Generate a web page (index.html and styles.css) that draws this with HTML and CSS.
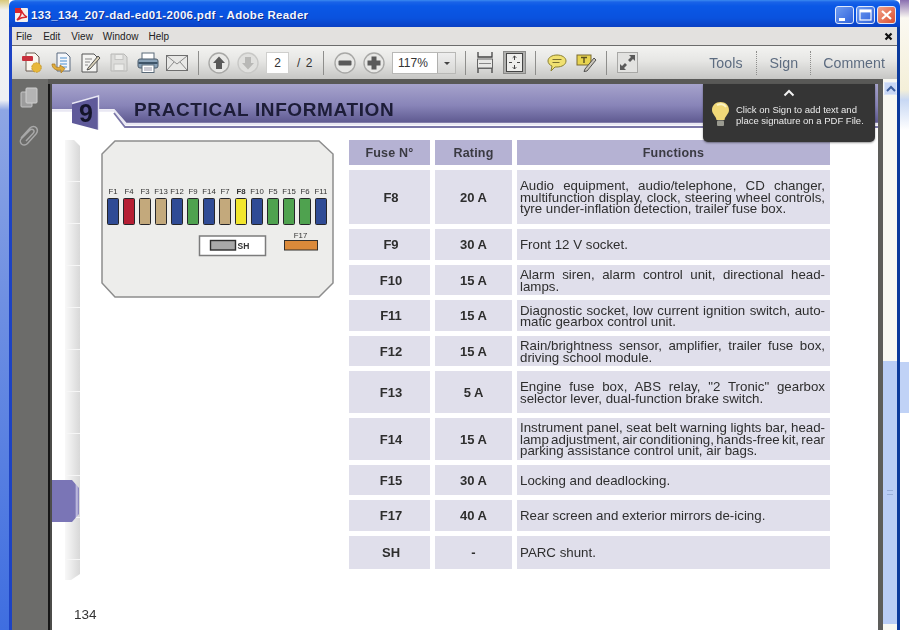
FILE: index.html
```html
<!DOCTYPE html>
<html lang="en">
<head>
<meta charset="utf-8">
<title>133_134_207-dad-ed01-2006.pdf - Adobe Reader</title>
<link rel="stylesheet" href="styles.css">
</head>
<body>
<div class="desk-left"></div>
<div class="window">
  <header class="titlebar">
    <svg class="app-icon" width="13" height="14" viewBox="0 0 13 14"><rect width="13" height="14" rx="1" fill="#f4f0ee"/><rect x="0" y="0" width="6" height="5" fill="#d8262c"/><path d="M2 12C5 9 7 5 6 2C8 6 9 8 12 9C8 9 5 10 2 12Z" fill="none" stroke="#d8262c" stroke-width="1.6"/></svg>
    <span class="title-text">133_134_207-dad-ed01-2006.pdf - Adobe Reader</span>
    <div class="win-buttons">
      <span class="win-btn"><svg width="19" height="18" viewBox="0 0 19 18"><rect x="4" y="12" width="6" height="3" fill="#fff"/></svg></span>
      <span class="win-btn"><svg width="19" height="18" viewBox="0 0 19 18"><rect x="4" y="4" width="11" height="10" fill="none" stroke="#fff" stroke-width="1.2"/><rect x="4" y="4" width="11" height="2.4" fill="#fff"/></svg></span>
      <span class="win-btn win-close"><svg width="19" height="18" viewBox="0 0 19 18"><path d="M5 5L14 13M14 5L5 13" stroke="#fff" stroke-width="2.2"/></svg></span>
    </div>
  </header>
  <div class="frame">
    <nav class="menubar">
      <span class="menu-item m-file">File</span>
      <span class="menu-item m-edit">Edit</span>
      <span class="menu-item m-view">View</span>
      <span class="menu-item m-window">Window</span>
      <span class="menu-item m-help">Help</span>
      <svg class="menu-close" width="9" height="9" viewBox="0 0 9 9"><path d="M1.5 1.5L7.5 7.5M7.5 1.5L1.5 7.5" stroke="#111" stroke-width="2.2"/></svg>
    </nav>
    <div class="toolbar">
      <span class="btn"><svg width="22" height="23" viewBox="0 0 22 23"><path d="M5 2H14L18 6V20H5Z" fill="#faf6ee" stroke="#6a5a50"/><rect x="1" y="5" width="11" height="5" rx="1" fill="#c8303c"/><circle cx="15.500" cy="16.500" r="4.800" fill="#e8b83c" stroke="#b98d22" stroke-width=".8" stroke-dasharray="2 1"/></svg></span>
      <span class="btn"><svg width="22" height="23" viewBox="0 0 22 23"><path d="M7 2H16L20 6V20H7Z" fill="#f4f6fa" stroke="#5a6a80"/><path d="M10 7H17M10 10H17M10 13H17M12 16H17" stroke="#4d8fd0" stroke-width="1.200"/><path d="M2 13C2 18 7 20 11 19V22L15 17.500 10 14V16C7 17 5 16 5 13Z" fill="#e0ac3c" stroke="#a8761c" stroke-width=".7"/></svg></span>
      <span class="btn"><svg width="22" height="23" viewBox="0 0 22 23"><path d="M3 3H15L18 6V21H3Z" fill="#f4f4f2" stroke="#555"/><path d="M6 8H13M6 11H11M6 14H9" stroke="#888"/><path d="M9 17L19 5L21 7L11 18L8 19Z" fill="#d8d0b8" stroke="#444" stroke-width=".9"/></svg></span>
      <span class="btn"><svg width="20" height="21" viewBox="0 0 20 21"><path d="M2 2H15L18 5V19H2Z" fill="#dcdcda" stroke="#b8b8b6"/><rect x="6" y="2.500" width="8" height="5" fill="#ececea" stroke="#c4c4c2"/><rect x="5" y="12" width="10" height="6.500" fill="#ececea" stroke="#c4c4c2"/></svg></span>
      <span class="btn"><svg width="22" height="22" viewBox="0 0 22 22"><rect x="5" y="1" width="12" height="7" fill="#fff" stroke="#5a6a78"/><rect x="1" y="7" width="20" height="9" rx="2" fill="#8aa2b8" stroke="#4d5d6c"/><rect x="1.500" y="10" width="19" height="2" fill="#3e5468"/><rect x="5" y="13" width="12" height="7.500" fill="#fff" stroke="#5a6a78"/><path d="M7 16H15M7 18H15" stroke="#99a"/></svg></span>
      <span class="btn"><svg width="22" height="16" viewBox="0 0 22 16"><rect x=".5" y=".5" width="21" height="15" fill="#e8e8e6" stroke="#6e6e6e"/><path d="M1 1L11 9L21 1M1 15L8 7M21 15L14 7" fill="none" stroke="#8a8a8a"/></svg></span>
      <span class="sep s-a"></span>
      <span class="btn b-up"><svg width="22" height="22" viewBox="0 0 22 22"><circle cx="11" cy="11" r="10" fill="#e8e8e6" stroke="#a8a8a6" stroke-width="1.400"/><path d="M11 4.500L17 11H14V17H8V11H5Z" fill="#5a5a5a"/></svg></span>
      <span class="btn"><svg width="22" height="22" viewBox="0 0 22 22"><circle cx="11" cy="11" r="10" fill="#e0e0de" stroke="#c8c8c6" stroke-width="1.400"/><path d="M11 17.500L17 11H14V5H8V11H5Z" fill="#b8b8b6"/></svg></span>
      <span class="page-box">2</span>
      <span class="page-total">/ 2</span>
      <span class="sep s-b"></span>
      <span class="btn b-minus"><svg width="22" height="22" viewBox="0 0 22 22"><circle cx="11" cy="11" r="10" fill="#e8e8e6" stroke="#a8a8a6" stroke-width="1.400"/><rect x="4.500" y="8.500" width="13" height="5" rx="1" fill="#5a5a5a"/></svg></span>
      <span class="btn"><svg width="22" height="22" viewBox="0 0 22 22"><circle cx="11" cy="11" r="10" fill="#e8e8e6" stroke="#a8a8a6" stroke-width="1.400"/><path d="M8.500 4.500H13.500V8.500H17.500V13.500H13.500V17.500H8.500V13.500H4.500V8.500H8.500Z" fill="#5a5a5a"/></svg></span>
      <div class="zoom-select"><span class="zoom-value">117%</span><span class="zoom-arrow"></span></div>
      <span class="sep s-c"></span>
      <span class="btn b-fitw"><svg width="18" height="23" viewBox="0 0 18 23"><path d="M2 1V6H16V1M2 22V17H16V22" fill="none" stroke="#444" stroke-width="1.300"/><rect x="1.500" y="8" width="15" height="9" fill="#e8e8e6" stroke="#666"/><path d="M3 12.500H15" stroke="#888"/></svg></span>
      <span class="btn-on"><svg width="17" height="19" viewBox="0 0 17 19"><rect x=".5" y=".5" width="16" height="18" fill="#eeeeec" stroke="#444"/><path d="M8.500 3V7M6.700 4.800L8.500 3L10.300 4.800M8.500 16V12M6.700 14.200L8.500 16L10.300 14.200M3 9.500H6M11 9.500H14" stroke="#444" fill="none"/></svg></span>
      <span class="sep s-d"></span>
      <span class="btn b-note"><svg width="20" height="18" viewBox="0 0 20 18"><path d="M10 1C15 1 19 3.500 19 7C19 10.500 15 13 10 13H8L4 17L5 12C2.500 11 1 9 1 7C1 3.500 5 1 10 1Z" fill="#f0e070" stroke="#8a8030"/><path d="M5.500 5.500H14.500M5.500 8.500H12.500" stroke="#7a7030"/></svg></span>
      <span class="btn b-hl"><svg width="21" height="18" viewBox="0 0 21 18"><rect x="1" y="1" width="14" height="10" fill="#e8d450" stroke="#7a6a30"/><path d="M5 3.500H11M8 3.500V9" stroke="#5a5020" stroke-width="1.400"/><path d="M9 15L18 4L20 6L11 17L8 17.500Z" fill="#c8c4ba" stroke="#444" stroke-width=".9"/></svg></span>
      <span class="sep s-e"></span>
      <span class="expand"><svg width="21" height="21" viewBox="0 0 21 21"><rect x=".5" y=".5" width="20" height="20" fill="#e2e2e0" stroke="#a8a8a6"/><path d="M12 3H18V9L16 7L13 10L11 8L14 5ZM9 18H3V12L5 14L8 11L10 13L7 16Z" fill="#5a5a5a"/></svg></span>
      <div class="panels">
        <span class="panel-link">Tools</span>
        <span class="panel-sep panel-sep-first"></span>
        <span class="panel-link">Sign</span>
        <span class="panel-sep"></span>
        <span class="panel-link">Comment</span>
      </div>
    </div>
    <div class="workspace">
      <aside class="navpanel">
        <svg class="nav-pages" width="18" height="21" viewBox="0 0 18 21"><rect x="1" y="5" width="11" height="15" rx="1" fill="#9c9c9c" stroke="#c4c4c4"/><rect x="6" y="1" width="11" height="15" rx="1" fill="#b4b4b4" stroke="#cfcfcf"/></svg>
        <svg class="nav-clip" width="21" height="23" viewBox="0 0 21 23"><path d="M3 14L12 4C14 2 17 2 18.500 4C20 6 19.500 8 18 10L9.500 19.500C8 21 5.500 21.500 3.500 20C2 18.500 2 16 3.500 14.500L12 6C13 5 14.500 5 15.500 6C16.500 7 16 8.500 15 9.500L8 17" fill="none" stroke="#a8a8a8" stroke-width="1.500"/></svg>
      </aside>
      <main class="page-area">
        <div class="page">
          <div class="banner">
            <svg class="banner-art" width="826" height="46" viewBox="0 0 826 46"><defs><linearGradient id="band" x1="0" y1="0" x2="0" y2="1"><stop offset="0" stop-color="#a6a3cc"/><stop offset=".55" stop-color="#8884b8"/><stop offset="1" stop-color="#5d588f"/></linearGradient></defs><path d="M0 0H826V39H74L62 25H0Z" fill="url(#band)"/><path d="M0 26.500H62L74 40H826" fill="none" stroke="#e9e8f3" stroke-width="2.400"/><path d="M62 29L73 43H826" fill="none" stroke="#7b77a8" stroke-width="1.800"/><path d="M20 19.500L46.500 12V46L20 39Z" fill="#5f5a9a"/><path d="M20 19.500L46.500 12V46" fill="none" stroke="#e8e7f4" stroke-width="1.400"/></svg>
            <span class="chapter">9</span>
            <h1 class="banner-title">PRACTICAL INFORMATION</h1>
          </div>
          <div class="content">
            <div class="strip"></div>
            <div class="side-tab"></div>
            <svg class="diagram" width="235" height="160" viewBox="0 0 235 160">
              <polygon points="15,2 219,2 233,15 233,144 219,158 15,158 2,144 2,15" fill="#ededeb" stroke="#8d8d8d" stroke-width="1.500"/>
              <g class="fuse-labels">
                <text x="13" y="55">F1</text><text x="29" y="55">F4</text><text x="45" y="55">F3</text><text x="61" y="55">F13</text><text x="77" y="55">F12</text><text x="93" y="55">F9</text><text x="109" y="55">F14</text><text x="125" y="55">F7</text><text x="141" y="55" class="fuse-strong">F8</text><text x="157" y="55">F10</text><text x="173" y="55">F5</text><text x="189" y="55">F15</text><text x="205" y="55">F6</text><text x="221" y="55">F11</text>
              </g>
              <g stroke="#26262a" stroke-width="1">
                <rect x="7.500" y="59.500" width="11" height="26" rx="1" fill="#2f4b95"/><rect x="23.500" y="59.500" width="11" height="26" rx="1" fill="#b51e33"/><rect x="39.500" y="59.500" width="11" height="26" rx="1" fill="#c3a97c"/><rect x="55.500" y="59.500" width="11" height="26" rx="1" fill="#c3a97c"/><rect x="71.500" y="59.500" width="11" height="26" rx="1" fill="#2f4b95"/><rect x="87.500" y="59.500" width="11" height="26" rx="1" fill="#4fa24f"/><rect x="103.500" y="59.500" width="11" height="26" rx="1" fill="#2f4b95"/><rect x="119.500" y="59.500" width="11" height="26" rx="1" fill="#c3a97c"/><rect x="135.500" y="59.500" width="11" height="26" rx="1" fill="#f2e62e"/><rect x="151.500" y="59.500" width="11" height="26" rx="1" fill="#2f4b95"/><rect x="167.500" y="59.500" width="11" height="26" rx="1" fill="#4fa24f"/><rect x="183.500" y="59.500" width="11" height="26" rx="1" fill="#4fa24f"/><rect x="199.500" y="59.500" width="11" height="26" rx="1" fill="#4fa24f"/><rect x="215.500" y="59.500" width="11" height="26" rx="1" fill="#2f4b95"/>
              </g>
              <rect x="99.500" y="97" width="66" height="19.500" fill="#fff" stroke="#7c7c7c" stroke-width="1.500"/>
              <rect x="110.500" y="101.500" width="25" height="9.500" fill="#a8a8a8" stroke="#2c2c2c" stroke-width="1.400"/>
              <text x="137.500" y="110" class="fuse-sh">SH</text>
              <text x="200.500" y="98.500" class="fuse-f17">F17</text>
              <rect x="184.500" y="101.500" width="33" height="9.500" fill="#db8a3a" stroke="#33302c"/>
            </svg>
            <div class="fuse-table">
              <div class="th">Fuse N°</div><div class="th">Rating</div><div class="th">Functions</div>
              <div class="td td-key td-id">F8</div><div class="td td-key">20 A</div>
              <div class="td td-text"><span class="line full">Audio equipment, audio/telephone, CD changer,</span><span class="line full tight">multifunction display, clock, steering wheel controls,</span><span class="line">tyre under-inflation detection, trailer fuse box.</span></div>
              <div class="td td-key td-id">F9</div><div class="td td-key">30 A</div>
              <div class="td td-text"><span class="line">Front 12 V socket.</span></div>
              <div class="td td-key td-id">F10</div><div class="td td-key">15 A</div>
              <div class="td td-text"><span class="line full">Alarm siren, alarm control unit, directional head-</span><span class="line">lamps.</span></div>
              <div class="td td-key td-id">F11</div><div class="td td-key">15 A</div>
              <div class="td td-text"><span class="line full tight">Diagnostic socket, low current ignition switch, auto-</span><span class="line">matic gearbox control unit.</span></div>
              <div class="td td-key td-id">F12</div><div class="td td-key">15 A</div>
              <div class="td td-text"><span class="line full">Rain/brightness sensor, amplifier, trailer fuse box,</span><span class="line">driving school module.</span></div>
              <div class="td td-key td-id">F13</div><div class="td td-key">5 A</div>
              <div class="td td-text"><span class="line full">Engine fuse box, ABS relay, "2 Tronic" gearbox</span><span class="line">selector lever, dual-function brake switch.</span></div>
              <div class="td td-key td-id">F14</div><div class="td td-key">15 A</div>
              <div class="td td-text"><span class="line full tight">Instrument panel, seat belt warning lights bar, head-</span><span class="line full tight">lamp adjustment, air conditioning, hands-free kit, rear</span><span class="line">parking assistance control unit, air bags.</span></div>
              <div class="td td-key td-id">F15</div><div class="td td-key">30 A</div>
              <div class="td td-text"><span class="line">Locking and deadlocking.</span></div>
              <div class="td td-key td-id">F17</div><div class="td td-key">40 A</div>
              <div class="td td-text"><span class="line">Rear screen and exterior mirrors de-icing.</span></div>
              <div class="td td-key td-id">SH</div><div class="td td-key">-</div>
              <div class="td td-text"><span class="line">PARC shunt.</span></div>
            </div>
          </div>
          <div class="page-number">134</div>
        </div>
        <div class="page-edge"></div>
        <div class="scrollbar">
          <span class="scroll-up"><svg width="10" height="7" viewBox="0 0 10 7"><path d="M1 6L5 2L9 6" fill="none" stroke="#3d5f9e" stroke-width="2"/></svg></span>
          <span class="scroll-thumb"><span class="grip"></span></span>
        </div>
        <div class="tooltip">
          <svg class="tip-chevron" width="12" height="8" viewBox="0 0 12 8"><path d="M1.500 6.500L6 2L10.500 6.500" fill="none" stroke="#f2f2f2" stroke-width="2"/></svg>
          <div class="tip-body">
            <svg class="tip-bulb" width="19" height="26" viewBox="0 0 19 26"><path d="M9.500 1C14.500 1 18 4.500 18 9C18 13 14 15 13.500 19H5.500C5 15 1 13 1 9C1 4.500 4.500 1 9.500 1Z" fill="#f0d878"/><path d="M6 4C9 2.500 13 3 15 6" fill="none" stroke="#fbf3c4" stroke-width="2"/><rect x="6" y="19.500" width="7" height="5.500" rx="1" fill="#9a9a90"/></svg>
            <p class="tip-text">Click on Sign to add text and<br>place signature on a PDF File.</p>
          </div>
        </div>
      </main>
    </div>
  </div>
</div>
<div class="desk-right"><div class="desk-thumb"></div></div>
</body>
</html>
```
FILE: styles.css
```css
* { box-sizing: border-box; }
html, body { margin: 0; padding: 0; }
body {
  width: 909px;
  height: 630px;
  overflow: hidden;
  display: flex;
  background: #fff;
  font-family: "Liberation Sans", Arial, sans-serif;
}
.desk-left {
  width: 9px;
  background: linear-gradient(180deg, #d9c97a 0, #f2f2f0 10px, #eef0f4 100px, #8ea6e4 110px, #6f90e2 300px, #3f6ee0 630px);
}
.window {
  width: 891px;
  height: 630px;
  display: flex;
  flex-direction: column;
  filter: blur(.35px);
}
.desk-right {
  width: 9px;
  background: linear-gradient(180deg, #8a6fb0 0, #fbf9f2 18px, #f4efd8 90px, #c8d8f4 100px, #fff 130px);
  padding-top: 362px;
}
.desk-thumb { height: 51px; background: #c0d2f6; }

.titlebar {
  height: 27px;
  flex: none;
  display: flex;
  align-items: center;
  padding: 0 4px 0 6px;
  border-radius: 6px 6px 0 0;
  background: linear-gradient(180deg, #3b8af0 0, #1a63e8 2px, #0a58e6 6px, #0a52de 18px, #0a40c4 27px);
}
.app-icon { flex: none; margin-top: 2px; }
.title-text {
  margin-left: 3px;
  margin-top: 3px;
  color: #f4f7ff;
  font-size: 11.500px;
  font-weight: 700;
  letter-spacing: .33px;
  white-space: nowrap;
  text-shadow: 1px 1px 0 #0a2c90;
}
.win-buttons { margin-left: auto; display: flex; gap: 2px; margin-top: 3px; }
.win-btn {
  width: 19px;
  height: 18px;
  display: block;
  border: 1px solid #dfe9fb;
  border-radius: 3px;
  background: linear-gradient(135deg, #6f9cf0, #2f62dc);
}
.win-btn svg { display: block; margin: -1px; }
.win-close { background: linear-gradient(135deg, #f0a088, #dd5030); }

.frame {
  flex: 1;
  min-height: 0;
  display: flex;
  flex-direction: column;
  border-left: 3px solid #1d43c4;
  border-right: 3px solid #0b3a9c;
}
.menubar {
  height: 18px;
  flex: none;
  display: flex;
  align-items: center;
  background: #e3e1df;
  font-size: 10px;
  color: #222;
}
.menu-item { display: block; }
.m-file { margin-left: 4px; }
.m-edit { margin-left: 11px; }
.m-view { margin-left: 11px; }
.m-window { margin-left: 10px; }
.m-help { margin-left: 10px; }
.menu-close { margin-left: auto; margin-right: 4px; }

.toolbar {
  height: 34px;
  flex: none;
  display: flex;
  align-items: center;
  padding-left: 5px;
  border-top: 1px solid #6c6c6c;
  background: linear-gradient(180deg, #f3f3f1 0, #e6e6e4 45%, #c6c6c4 100%);
}
.btn { width: 29px; flex: none; display: flex; justify-content: center; align-items: center; }
.sep { width: 1px; height: 24px; flex: none; background: #8e8e8c; }
.s-a { margin-left: 7px; }
.s-b { margin-left: 8px; }
.s-c { margin-left: 9px; }
.s-d { margin-left: 9px; }
.s-e { margin-left: 5px; }
.b-up { margin-left: 5px; }
.page-box {
  width: 23px;
  height: 22px;
  flex: none;
  margin-left: 4px;
  background: #fff;
  border: 1px solid #cfcfcd;
  font-size: 12px;
  color: #333;
  text-align: center;
  line-height: 20px;
}
.page-total { width: 18px; flex: none; margin-left: 8px; font-size: 12px; color: #333; white-space: nowrap; word-spacing: 2px; }
.b-minus { margin-left: 6px; }
.zoom-select {
  width: 64px;
  height: 22px;
  flex: none;
  margin-left: 4px;
  display: flex;
  border: 1px solid #b8b8b6;
  background: #fff;
}
.zoom-value { width: 44px; font-size: 12px; color: #333; line-height: 20px; padding-left: 5px; }
.zoom-arrow { flex: 1; border-left: 1px solid #b0b0ae; background: linear-gradient(180deg, #eee, #d8d8d6); position: relative; }
.zoom-arrow::after {
  content: "";
  position: absolute;
  left: 6px;
  top: 9px;
  border: 3px solid transparent;
  border-top: 3px solid #444;
}
.b-fitw { width: 26px; margin-left: 6px; }
.btn-on {
  width: 23px;
  height: 23px;
  flex: none;
  margin-left: 5px;
  display: flex;
  align-items: center;
  justify-content: center;
  background: #b0b0ae;
  border: 1px solid #8a8a88;
}
.b-note { margin-left: 6px; }
.b-hl { margin-left: 1px; }
.expand { width: 21px; height: 21px; flex: none; margin-left: 10px; }
.expand svg { display: block; }
.panels { margin-left: auto; padding-right: 12px; display: flex; align-items: center; gap: 12px; }
.panel-link { font-size: 14.200px; color: #5d6c80; letter-spacing: .05px; }
.panel-sep { width: 1px; height: 24px; border-left: 1px dotted #8e8e8c; }
.panel-sep-first { margin-right: 1px; margin-left: 1px; }

.workspace { flex: 1; min-height: 0; display: flex; }
.navpanel {
  width: 36px;
  flex: none;
  display: flex;
  flex-direction: column;
  align-items: center;
  padding-top: 8px;
  background: #6c6c6a;
}
.nav-pages { margin-left: -3px; }
.nav-clip { margin-top: 16px; margin-left: -3px; }

.page-area {
  flex: 1;
  min-width: 0;
  position: relative;
  display: flex;
  padding-top: 5px;
  padding-left: 4px;
  background: linear-gradient(90deg, #161616 0, #161616 1.500px, #4c4c4a 1.500px);
}
.page-area::before {
  content: "";
  position: absolute;
  left: 0;
  right: 0;
  top: 0;
  height: 5px;
  background: #595957;
}
.page {
  width: 826px;
  flex: none;
  background: #fff;
  overflow: hidden;
}
.banner { position: relative; height: 43px; }
.banner-art { position: absolute; left: 0; top: 0; }
.banner-title {
  position: relative;
  margin: 0;
  padding: 15px 0 0 82px;
  font-size: 19px;
  line-height: 22px;
  font-weight: 700;
  color: #1d1d38;
  letter-spacing: .62px;
  white-space: nowrap;
}
.chapter {
  position: absolute;
  left: 26px;
  top: 16px;
  width: 16px;
  text-align: center;
  font-size: 25px;
  line-height: 26px;
  font-weight: 700;
  color: #14142a;
}
.content {
  position: relative;
  height: 458px;
  display: flex;
  align-items: flex-start;
  padding: 13px 0 0 13px;
}
.strip {
  width: 15px;
  height: 440px;
  flex: none;
  clip-path: polygon(0 0, 9px 0, 15px 6px, 15px 434px, 6px 440px, 0 440px);
  background:
    repeating-linear-gradient(180deg, transparent 0, transparent 41px, #f6f6f6 41px, #f6f6f6 42px),
    linear-gradient(90deg, #f8f8f8 0, #ececec 40%, #d8d8d8 100%);
}
.side-tab {
  position: absolute;
  left: 0;
  top: 353px;
  width: 27px;
  height: 42px;
  clip-path: polygon(0 0, 20px 0, 27px 8px, 27px 34px, 20px 42px, 0 42px);
  background: linear-gradient(90deg, #7a75b6 0, #7a75b6 85%, #c9c6e4 92%, #7a75b6 100%);
}
.diagram { flex: none; margin-left: 20px; margin-top: -1px; }
.fuse-labels text { font-size: 7.800px; fill: #333; text-anchor: middle; font-family: "Liberation Sans", Arial, sans-serif; }
.fuse-labels .fuse-strong { font-weight: 700; }
.fuse-sh { font-size: 8.500px; font-weight: 700; fill: #333; font-family: "Liberation Sans", Arial, sans-serif; }
.fuse-f17 { font-size: 7.800px; fill: #333; text-anchor: middle; font-family: "Liberation Sans", Arial, sans-serif; }

.fuse-table {
  margin-left: 14px;
  width: 481px;
  flex: none;
  display: grid;
  grid-template-columns: 81px 77px 313px;
  grid-template-rows: 25px 54px 31px 30px 31px 30px 42px 42px 30px 31px 33px;
  column-gap: 5px;
  row-gap: 5px;
  color: #2e2e2e;
}
.th {
  background: #b5b2d3;
  display: flex;
  align-items: center;
  justify-content: center;
  font-size: 12.500px;
  font-weight: 700;
  color: #3a3a42;
  letter-spacing: .2px;
}
.td { background: #e0dfeb; }
.td-key {
  display: flex;
  align-items: center;
  justify-content: center;
  font-size: 13px;
  font-weight: 700;
}
.td-id { padding-left: 3px; }
.td-text {
  display: flex;
  flex-direction: column;
  justify-content: center;
  padding: 1px 5px 0 3px;
  font-size: 13.300px;
  line-height: 11.500px;
}
.line { display: block; white-space: nowrap; }
.full { white-space: normal; text-align: justify; text-align-last: justify; }
.tight { word-spacing: -1.600px; }
.page-number { margin: 21px 0 0 22px; font-size: 13.500px; line-height: 18px; color: #333; }

.page-edge { width: 5px; flex: none; background: #5d5d5a; }
.scrollbar {
  flex: 1;
  display: flex;
  flex-direction: column;
  position: relative;
  margin-top: -5px;
  background: #f8f8f2;
}
.scroll-up {
  height: 13px;
  margin: 3px 0 0 1px;
  display: flex;
  align-items: center;
  justify-content: center;
  background: #c8d7f5;
  border: 1px solid #dbe5f8;
}
.scroll-thumb {
  margin-top: 266px;
  height: 263px;
  display: flex;
  align-items: center;
  justify-content: center;
  background: #b9cdf5;
}
.grip { width: 6px; height: 5px; border-top: 1px solid #98aed8; border-bottom: 1px solid #98aed8; }

.tooltip {
  position: absolute;
  left: 655px;
  top: 5px;
  width: 172px;
  height: 58px;
  padding-top: 5px;
  border-radius: 0 0 5px 5px;
  background: #353535;
  box-shadow: 0 1px 2px rgba(0,0,0,.4);
}
.tip-chevron { display: block; margin: 0 auto; }
.tip-body { display: flex; align-items: center; margin-top: 4px; padding-left: 8px; }
.tip-bulb { flex: none; }
.tip-text { margin: 2px 0 0 6px; font-size: 9.500px; line-height: 11.500px; color: #eaeaea; white-space: nowrap; }
```
